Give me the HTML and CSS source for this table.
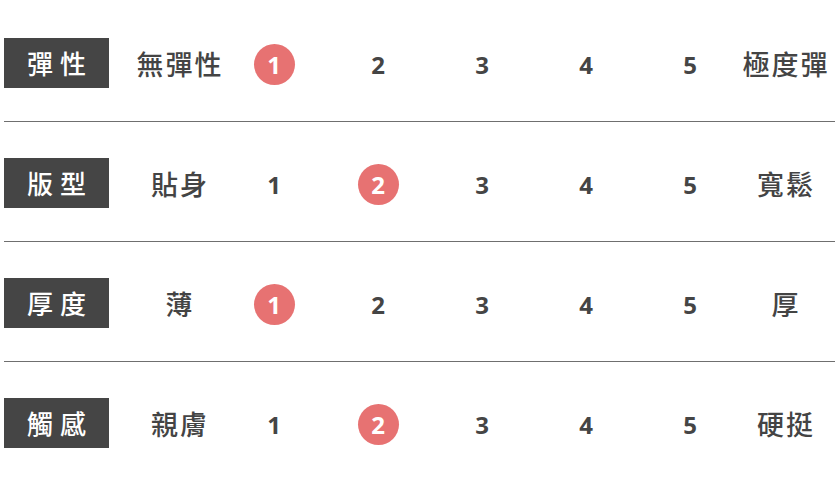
FILE: index.html
```html
<!DOCTYPE html>
<html lang="zh-Hant">
<head>
<meta charset="utf-8">
<link rel="stylesheet" href="styles.css">
</head>
<body>
<div class="chart">
  <div class="row">
    <div class="label">彈性</div>
    <div class="lo">無彈性</div>
    <div class="nums">
      <span class="n on">1</span><span class="n">2</span><span class="n">3</span><span class="n">4</span><span class="n">5</span>
    </div>
    <div class="hi">極度彈</div>
  </div>
  <div class="divider"></div>
  <div class="row">
    <div class="label">版型</div>
    <div class="lo">貼身</div>
    <div class="nums">
      <span class="n">1</span><span class="n on">2</span><span class="n">3</span><span class="n">4</span><span class="n">5</span>
    </div>
    <div class="hi">寬鬆</div>
  </div>
  <div class="divider"></div>
  <div class="row">
    <div class="label">厚度</div>
    <div class="lo">薄</div>
    <div class="nums">
      <span class="n on">1</span><span class="n">2</span><span class="n">3</span><span class="n">4</span><span class="n">5</span>
    </div>
    <div class="hi">厚</div>
  </div>
  <div class="divider"></div>
  <div class="row">
    <div class="label">觸感</div>
    <div class="lo">親膚</div>
    <div class="nums">
      <span class="n">1</span><span class="n on">2</span><span class="n">3</span><span class="n">4</span><span class="n">5</span>
    </div>
    <div class="hi">硬挺</div>
  </div>
</div>
</body>
</html>
```

FILE: styles.css
```css
html, body {
  margin: 0;
  padding: 0;
  background: #ffffff;
  overflow: hidden;
}

.chart {
  padding-top: 38px;
  font-family: "Noto Sans CJK TC", "Noto Sans", sans-serif;
  color: #444444;
}

.row {
  display: flex;
  align-items: center;
  height: 50px;
  padding-left: 4px;
}

.label {
  width: 105px;
  height: 50px;
  background: #454545;
  color: #ffffff;
  font-size: 26px;
  font-weight: 500;
  line-height: 50px;
  letter-spacing: 7px;
  text-indent: 7px;
  text-align: center;
  box-sizing: border-box;
}

.lo {
  width: 140px;
  text-align: center;
  font-size: 27px;
  font-weight: 500;
  letter-spacing: 2px;
  text-indent: 2px;
}

.nums {
  display: flex;
  align-items: center;
  gap: 54px;
}

.n {
  width: 50px;
  height: 41px;
  display: flex;
  align-items: center;
  justify-content: center;
  font-family: "Open Sans", "Liberation Sans", sans-serif;
  font-weight: 700;
  font-size: 24px;
  color: #454545;
  margin-top: 3px;
}

.n.on {
  width: 41px;
  margin: 3px 4.5px 0;
  border-radius: 50%;
  background: #e77272;
  color: #ffffff;
}

.hi {
  width: 100px;
  margin-left: 20px;
  text-align: center;
  font-size: 27px;
  font-weight: 500;
  letter-spacing: 2px;
  text-indent: 2px;
}

.divider {
  height: 1px;
  background: #6f6f6f;
  margin: 33px 5px 36px 4px;
}
```
